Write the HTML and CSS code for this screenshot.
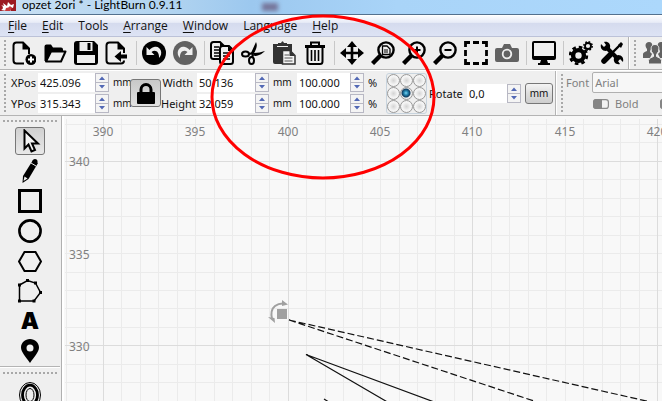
FILE: index.html
```html
<!DOCTYPE html>
<html lang="en">
<head>
<meta charset="utf-8">
<title>opzet 2ori * - LightBurn 0.9.11</title>
<link rel="stylesheet" href="styles.css">
</head>
<body>
<svg class="defs" aria-hidden="true">
  <symbol id="arrows" viewBox="0 0 14 19"><rect x=".5" y=".5" width="13" height="9" fill="#f4f4f4" stroke="#b8b8c4"/><rect x=".5" y="9.5" width="13" height="9" fill="#f4f4f4" stroke="#b8b8c4"/><path d="M7 3.500 10 7H4zM4 12h6l-3 3.500z" fill="#5268b5"/></symbol>
  <symbol id="toggle" viewBox="0 0 16 10"><rect x=".6" y=".6" width="14.800" height="8.800" rx="2.500" fill="#f2f2f2" stroke="#8a8a8a" stroke-width="1.200"/><path d="M3 0h6v10H3Q0 10 0 7V3Q0 0 3 0z" fill="#858585"/></symbol>
  <symbol id="lens" viewBox="0 0 24 24"><circle cx="15" cy="9" r="7.600" fill="none" stroke="#000" stroke-width="2.400"/><path d="m9.500 14.500-8 8" stroke="#000" stroke-width="4.400"/></symbol>
</svg>

<header class="titlebar">
  <svg class="logo" viewBox="0 0 16 12"><path d="M0 0h16v11H0z" fill="#9c1a22"/><path d="M1 10c3-1 2-4 0-5l3 1-1-3 4 3 1-4 3 3 3-1-1 4-3-1 1 4-3-2-1 2z" fill="#fff"/><path d="M6 8c2 0 3-1 4-2l2 2-2 3H5z" fill="#c73a3e"/></svg>
  <h1>opzet 2ori * - LightBurn 0.9.11</h1>
  <span class="ghost"></span>
</header>

<nav class="menubar">
  <button><u>F</u>ile</button><button><u>E</u>dit</button><button>Tools</button><button><u>A</u>rrange</button><button><u>W</u>indow</button><button>Language</button><button><u>H</u>elp</button>
</nav>

<div class="toolbar">
  <span class="grip"></span>
  <div class="tools">
    <button aria-label="New"><svg viewBox="0 0 24 24"><path d="M12 22.500H4.500Q1.500 22.500 1.500 19.500V4.500Q1.500 1.500 4.500 1.500H11l6 6v5.500" fill="none" stroke="#000" stroke-width="2"/><path d="M10.500 1v7.500H18z"/><circle cx="19" cy="18.500" r="5.500"/><path d="M19 15.500v6M16 18.500h6" stroke="#fff" stroke-width="2"/></svg></button>
    <button aria-label="Open"><svg viewBox="0 0 24 24"><path d="M1.500 20V5.500Q1.500 3.500 3.500 3.500H8l2 3h8q2 0 2 2V11H8L3 20z"/><path d="M8 10.500h14.500L18 20.500H3z" fill="#efefef" stroke="#000" stroke-width="2" stroke-linejoin="round"/></svg></button>
    <button aria-label="Save"><svg viewBox="0 0 24 24"><path d="M3 0h17l4 4v17q0 3-3 3H3q-3 0-3-3V3q0-3 3-3z"/><path d="M5.500 1h13v9h-13zM3 14h18v8H3z" fill="#efefef"/><path d="M13.500 2h3v7h-3z"/></svg></button>
    <button aria-label="Import"><svg viewBox="0 0 24 24"><path d="M19 12V7.500l-6-6H4.500Q1.500 1.500 1.500 4.500v15q0 3 3 3H16q3 0 3-3" fill="none" stroke="#000" stroke-width="2"/><path d="M12.500 1v7.500H20zM9.500 15.500 16 10v3.500h6v4h-6V21z"/></svg></button>
    <i class="sep"></i>
    <button aria-label="Undo"><svg viewBox="0 0 24 24"><circle cx="12" cy="12" r="12"/><path d="M4.500 6v8h8l-3-3c4-3 8 0 7.500 6 5-5 1-13-5-11-2 .5-3.500 1.500-4.500 3z" fill="#efefef"/></svg></button>
    <button aria-label="Redo"><svg viewBox="0 0 24 24"><circle cx="12" cy="12" r="12" fill="#626262"/><path d="M19.500 6v8h-8l3-3c-4-3-8 0-7.500 6-5-5-1-13 5-11 2 .5 3.500 1.500 4.500 3z" fill="#efefef"/></svg></button>
    <i class="sep"></i>
    <button aria-label="Copy"><svg viewBox="0 0 24 24"><g fill="#efefef" stroke="#000" stroke-width="2"><path d="M10 18H3.500Q1 18 1 15.500V3.500Q1 1 3.500 1H10l4 4v3"/><path d="M12.500 5H19l4 4v11.500q0 2.500-2.500 2.500h-8q-2.500 0-2.500-2.500v-13Q10 5 12.500 5z"/></g><path d="M4 6h5M4 9h5M4 12h5M4 15h5M13 12h7M13 15h7M13 18h7" stroke="#000" stroke-width="1.500"/><path d="M18 5v5h5zM10 1v4h4z"/></svg></button>
    <button aria-label="Cut"><svg viewBox="0 0 24 24"><path d="M15 1c2 4 0 8-3 13l-2-2zM24 10c-4 4-7 5-12 5l1-3c4 0 7-1 11-2z"/><path d="m8 13 4-1M11.500 16V12" stroke="#000" stroke-width="2"/><ellipse cx="4.500" cy="13" rx="3.500" ry="2.500" fill="none" stroke="#000" stroke-width="2"/><ellipse cx="10.500" cy="19.500" rx="2.500" ry="3.500" fill="none" stroke="#000" stroke-width="2"/></svg></button>
    <button aria-label="Paste"><svg viewBox="0 0 24 24"><path d="M1 3h5V2h3q1.500-3.500 3 0h3v1h5v8h-8v12H3q-2 0-2-2z" fill="#333"/><path d="M5 5.500h11" stroke="#efefef"/><path d="M10.500 9.500H18l5 5v8.500H10.500z" fill="#f4f4f4" stroke="#333" stroke-width="1.500"/><path d="M12.500 14H17M12.500 17h8M12.500 20h8" stroke="#555"/><path d="M17.500 9v6H23z" fill="#333"/></svg></button>
    <button aria-label="Delete"><svg viewBox="0 0 24 24"><g fill="none" stroke="#000"><path d="M2 5.500h20" stroke-width="3"/><path d="M8 4V1.500h8V4M4.500 7v13.500Q4.500 23 7 23h10q2.500 0 2.500-2.500V7" stroke-width="2"/><path d="M8.500 9v11M12 9v11M15.500 9v11" stroke-width="1.600"/></g></svg></button>
    <i class="sep"></i>
    <button aria-label="Pan"><svg viewBox="0 0 24 24"><path d="M12 3v18M3 12h18" stroke="#000" stroke-width="2.600"/><path d="m12 0 5 6H7zM12 24l5-6H7zM0 12l6-5v10zM24 12l-6-5v10z"/></svg></button>
    <button aria-label="Zoom to page"><svg viewBox="0 0 24 24"><use href="#lens"/><path d="M11.500 5h4.500l3 3v5.500h-7.500z" fill="none" stroke="#000" stroke-width="1.300"/><path d="M13 9h4M13 11h4" stroke="#000"/></svg></button>
    <button aria-label="Zoom in"><svg viewBox="0 0 24 24"><use href="#lens"/><path d="M15 5.500v7M11.500 9h7" stroke="#000" stroke-width="2"/></svg></button>
    <button aria-label="Zoom out"><svg viewBox="0 0 24 24"><use href="#lens"/><path d="M11.500 9h7" stroke="#000" stroke-width="2"/></svg></button>
    <button aria-label="Frame selection"><svg viewBox="0 0 24 24"><path d="M1.500 6V1.500H6M9 1.500h6M18 1.500h4.500V6M22.500 9v6M22.500 18v4.500H18M15 22.500H9M6 22.500H1.500V18M1.500 15V9" fill="none" stroke="#000" stroke-width="2.800"/></svg></button>
    <button aria-label="Camera"><svg viewBox="0 0 24 24"><path d="M2 7h5l2-4h6l2 4h5q2 0 2 2v10q0 2-2 2H2q-2 0-2-2V9q0-2 2-2z" fill="#626262"/><circle cx="12" cy="13" r="4.300" fill="none" stroke="#efefef" stroke-width="1.800"/></svg></button>
    <i class="sep"></i>
    <button aria-label="Preview"><svg viewBox="0 0 24 24"><path d="M2 0h20q2 0 2 2v15q0 2-2 2h-7l1 3h2v2H6v-2h2l1-3H2q-2 0-2-2V2Q0 0 2 0z"/><path d="M2 2h20v13H2z" fill="#efefef"/></svg></button>
    <i class="sep"></i>
    <button aria-label="Settings"><svg viewBox="0 0 24 24"><circle cx="9.500" cy="14.500" r="5.400" fill="none" stroke="#000" stroke-width="4.400"/><circle cx="9.500" cy="14.500" r="8.400" fill="none" stroke="#000" stroke-width="2.600" stroke-dasharray="3.600 3"/><circle cx="19" cy="5" r="3" fill="none" stroke="#000" stroke-width="1.800"/><circle cx="19" cy="5" r="4.200" fill="none" stroke="#000" stroke-width="1.500" stroke-dasharray="1.700 1.600"/></svg></button>
    <button aria-label="Machine tools"><svg viewBox="0 0 24 24"><path d="m6 6 13 13" stroke="#000" stroke-width="4"/><path d="M1 3l3 3 2-2-2-3c4-1 7 2 6 6l-4 3C2 10 0 7 1 3zM23 21l-3-3-2 2 2 3c-4 1-7-2-6-6l4-3c4 0 6 3 5 7z"/><path d="M20 4 11 13" stroke="#000" stroke-width="2.400"/><path d="m21 1 2 2-2 4-3-3z"/><path d="m10 14-6 6" stroke="#000" stroke-width="5.500" stroke-linecap="round"/></svg></button>
  </div>
  <span class="divider"></span>
  <span class="grip"></span>
  <button class="people" aria-label="Group"><svg viewBox="0 0 24 24" fill="#626262"><path d="M6 1c3 0 4 3 3 6l-2 3c0 2 2 2 2 3l-2 4H0v-4q0-1.500 4-3V8C1 4 3 1 6 1zM18 1c-3 0-4 3-3 6l2 3c0 2-2 2-2 3l2 4h7v-4q0-1.500-4-3V8c3-4 1-7-2-7z"/><path d="M12 3.500c3.500 0 4.500 3 3.500 7l-2 3v2q5 1.500 5 4v3.500H5.500V19.500q0-2.500 5-4v-2l-2-3c-1-4 0-7 3.500-7z" stroke="#efefef"/></svg></button>
</div>

<div class="toolbar props">
  <span class="grip"></span>
  <div class="pair pos">
    <label for="xp">XPos</label><span class="spin"><input id="xp" value="425.096"><svg><use href="#arrows"/></svg></span><span class="mm">mm</span>
    <label for="yp">YPos</label><span class="spin"><input id="yp" value="315.343"><svg><use href="#arrows"/></svg></span><span class="mm">mm</span>
  </div>
  <button class="lock" aria-label="Lock aspect ratio"><svg viewBox="0 0 20 23"><path d="M5 11V7.500a5 5 0 0 1 10 0V11" fill="none" stroke="#000" stroke-width="3"/><rect x="1" y="10" width="18" height="12" rx="1"/></svg></button>
  <div class="pair size">
    <label for="w">Width</label><span class="spin"><input id="w" value="50.136"><svg><use href="#arrows"/></svg></span><span class="mm">mm</span>
    <label for="h">Height</label><span class="spin"><input id="h" value="32.059"><svg><use href="#arrows"/></svg></span><span class="mm">mm</span>
  </div>
  <div class="pair scale">
    <span class="spin"><input aria-label="Width percent" value="100.000"><svg><use href="#arrows"/></svg></span><span>%</span>
    <span class="spin"><input aria-label="Height percent" value="100.000"><svg><use href="#arrows"/></svg></span><span>%</span>
  </div>
  <div class="anchor" role="radiogroup" aria-label="Anchor">
    <input type="radio" name="a" aria-label="Top left"><input type="radio" name="a" aria-label="Top"><input type="radio" name="a" aria-label="Top right">
    <input type="radio" name="a" aria-label="Left"><input type="radio" name="a" aria-label="Center" checked><input type="radio" name="a" aria-label="Right">
    <input type="radio" name="a" aria-label="Bottom left"><input type="radio" name="a" aria-label="Bottom"><input type="radio" name="a" aria-label="Bottom right">
  </div>
  <label class="rotate" for="r">Rotate</label>
  <span class="spin angle"><input id="r" value="0,0"><svg><use href="#arrows"/></svg></span>
  <button class="unit mm">mm</button>
  <span class="divider"></span>
  <span class="grip"></span>
  <div class="font">
    <div class="line"><label for="f">Font</label><select id="f"><option>Arial</option></select></div>
    <div class="line toggles"><button><svg><use href="#toggle"/></svg>Bold</button><button aria-label="Italic"><svg><use href="#toggle"/></svg></button></div>
  </div>
</div>

<main class="work">
  <aside class="side">
    <span class="grip flat"></span>
    <button class="on" aria-label="Select"><svg viewBox="0 0 24 24"><path d="M6.500 1.500v18l4-4 3 7 3.500-1.500-3-6.500h6z" fill="#f4f4f4" stroke="#000" stroke-width="2"/></svg></button>
    <button aria-label="Draw lines"><svg viewBox="0 0 24 24"><path d="m15 1 5 3-9.500 16-6 4 .5-7z"/><path d="m6.500 17.500 3 2-4 2.500z" fill="#efefef"/><path d="m13 4 5 3" stroke="#efefef"/><circle cx="17" cy="2.500" r="2.500"/></svg></button>
    <button aria-label="Rectangle"><svg viewBox="0 0 24 24"><path d="M1.500 1.500h21v21h-21z" fill="none" stroke="#000" stroke-width="3"/></svg></button>
    <button aria-label="Ellipse"><svg viewBox="0 0 24 24"><circle cx="12" cy="12" r="10.600" fill="none" stroke="#000" stroke-width="2.600"/></svg></button>
    <button aria-label="Polygon"><svg viewBox="0 0 24 24"><path d="M6.500 3h11L23 12.500 17.500 22h-11L1 12.500z" fill="none" stroke="#000" stroke-width="2"/></svg></button>
    <button aria-label="Edit nodes"><svg viewBox="0 0 24 24"><path d="M1.500 22V6l8-4.500 8 2.500 5 9.500L16 22z" fill="none" stroke="#000" stroke-width="1.500"/><path d="M0 4.500h3v3H0zM8 0h3v3H8zM16 2.500h3v3h-3zM21 12h3v3h-3zM14.500 20.500h3v3h-3zM0 20.500h3v3H0z"/></svg></button>
    <button aria-label="Text"><b>A</b></button>
    <button aria-label="Position laser"><svg viewBox="0 0 24 24"><path d="M12 0c5 0 9 4 9 8.500C21 13 16 18 12 24 8 18 3 13 3 8.500 3 4 7 0 12 0zm0 5.500a3.500 3.500 0 1 0 0 7 3.500 3.500 0 0 0 0-7z"/></svg></button>
    <span class="rule"></span>
    <span class="grip flat"></span>
    <button class="offset" aria-label="Offset shapes"><svg viewBox="0 0 24 28"><g fill="none" stroke="#000"><ellipse cx="12" cy="14" rx="10.500" ry="12.500"/><ellipse cx="12" cy="14" rx="7.500" ry="9.800" stroke-width="2.800"/><ellipse cx="12" cy="14" rx="4" ry="6.500"/></g></svg></button>
  </aside>
  <svg class="canvas">
    <g transform="translate(-64 -116)">
      <path class="minor" d="M66 119V900M85 119V900M121 119V900M140 119V900M158 119V900M177 119V900M195 119V900M214 119V900M232 119V900M251 119V900M269 119V900M306 119V900M325 119V900M343 119V900M362 119V900M380 119V900M399 119V900M417 119V900M435 119V900M454 119V900M491 119V900M509 119V900M528 119V900M546 119V900M565 119V900M583 119V900M602 119V900M620 119V900M639 119V900M65 124H1600M65 142H1600M65 179H1600M65 198H1600M65 216H1600M65 235H1600M65 253H1600M65 272H1600M65 290H1600M65 308H1600M65 327H1600M65 364H1600M65 382H1600"/>
      <path class="major" d="M103 119V900M288 119V900M472 119V900M657 119V900M65 161H1600M65 345H1600"/>
      <g class="ticks">
        <g class="mid"><text x="103" y="136">390</text><text x="195" y="136">395</text><text x="288" y="136">400</text><text x="380" y="136">405</text><text x="472" y="136">410</text><text x="565" y="136">415</text><text x="657" y="136">420</text></g>
        <text x="69" y="166">340</text><text x="69" y="259">335</text><text x="69" y="351">330</text>
      </g>
      <g class="shape"><path stroke-dasharray="7 3" d="M289 320 655 403M289 320 540 403"/><path d="M306 354.500 445 406M306 354.500 396 407M324 399l8 5"/></g>
      <path d="M277 309h10v10h-10z" fill="#a0a0a0"/>
      <path d="M272 319q-2-9 3-13 4-3 9-2.500" fill="none" stroke="#a0a0a0" stroke-width="2"/><path d="m282 300 6 4.500-6 1.500zM268 317l6.500 1 .5 5z" fill="#a0a0a0"/>
    </g>
  </svg>
</main>
<svg class="mark" aria-hidden="true"><ellipse cx="323" cy="97" rx="111" ry="81"/></svg>
</body>
</html>
```
FILE: styles.css
```css
* { box-sizing: border-box; }
body {
  margin: 0;
  height: 100vh;
  display: flex;
  flex-direction: column;
  overflow: hidden;
  position: relative;
  background: #efefef;
  color: #111;
  font: 11px/19px "Noto Sans", sans-serif;
}
button, input, select { font: inherit; color: inherit; margin: 0; padding: 0; }
button { border: 0; background: none; }
svg { display: block; }
.defs { position: absolute; width: 0; height: 0; }

.titlebar {
  flex: none;
  display: flex;
  height: 15px;
  overflow: hidden;
  border-bottom: 1px solid #54718e;
  background: linear-gradient(90deg, #c9e0f3, #b2d4f0 25%, #9cc8ef 38%, #a9d4f8 60%, #acd8fc);
}
.logo { width: 16px; height: 12px; }
.titlebar h1 { margin: 0 0 0 6px; font: 12px/9px Lato, sans-serif; color: #000; }
.ghost { width: 16px; height: 8px; margin: 3px 0 0 80px; background: #75759a; filter: blur(2px); }

.menubar {
  flex: none;
  display: flex;
  gap: 15px;
  height: 22px;
  padding: 0 8px;
  border-top: 1px solid #fff;
  border-bottom: 1px solid #bcc2d8;
  background: linear-gradient(#fbfcfe, #e8ecf7 32%, #d5dbee 36%, #dde3f4);
}
.menubar button { font: 12px/20px "Open Sans", sans-serif; }
.menubar u { text-underline-offset: 2px; }

.toolbar {
  flex: none;
  display: flex;
  align-items: center;
  height: 33px;
  border-bottom: 1px solid #b4b4b4;
  background: #efefef;
}
.grip {
  flex: none;
  width: 3px;
  height: 26px;
  margin-left: 4px;
  background: radial-gradient(circle at 1px 1px, #a8a8a8 1px, transparent 1px) 0 0 / 4px 4px;
}
.tools { display: flex; align-items: center; margin-left: 2px; }
.tools button { flex: none; width: 31px; padding: 0 4px 0 3px; }
.tools svg, .side svg, .people svg { width: 24px; height: 24px; }
.sep { width: 6px; height: 24px; background: linear-gradient(#c8c8c8, #c8c8c8) 3px 0 / 1px 24px no-repeat; }
.divider { flex: none; width: 2px; align-self: stretch; background: #b4b4b4; border-right: 1px solid #fff; }
.people { flex: none; margin-left: 6px; }

.props { height: 46px; border-top: 1px solid #fff; }
.props .grip { height: 38px; }
.pair { flex: none; display: grid; gap: 2px 4px; align-items: center; }
.pair label { text-align: right; }
.pos { grid-template-columns: 23px 71px 17px; margin-left: 4px; }
.size { grid-template-columns: 32px 72px 17px; }
.scale { grid-template-columns: 67px 12px; margin-left: 7px; }
.mm { font-size: 10px; }
.spin { display: flex; height: 19px; background: #fff; }
.spin input { flex: 1; min-width: 0; border: 0; padding-left: 2px; background: transparent; outline: 0; }
.spin svg { flex: none; width: 14px; height: 19px; }
.lock {
  flex: none;
  width: 31px;
  height: 28px;
  padding: 2px 5px;
  border: 1px solid #777;
  border-radius: 3px;
  background: linear-gradient(#c8c8c8, #e2e2e2);
}
.lock svg { width: 20px; height: 23px; }
.anchor {
  flex: none;
  display: grid;
  grid-template-columns: repeat(3, 13px);
  width: 41px;
  height: 41px;
  margin-left: 6px;
  border: 1px solid #c8d4de;
  border-radius: 3px;
}
.anchor input {
  appearance: none;
  width: 13px;
  height: 13px;
  border: 1px solid #999;
  border-radius: 50%;
  background: radial-gradient(circle, #d4d4d4, #f4f4f4 4px);
}
.anchor input:checked { background: radial-gradient(circle at 5px 5px, #7fd4f4, #2386b0 2px, #123c60 4px, #eee 5px); }
.rotate { flex: none; width: 34px; margin-left: 2px; }
.angle { flex: none; width: 54px; margin-left: 4px; }
.unit {
  flex: none;
  width: 28px;
  height: 21px;
  margin: 0 2px 0 4px;
  border: 1px solid #777;
  border-radius: 3px;
  background: linear-gradient(#f4f4f4, #ddd 50%, #cecece);
  line-height: 18px;
}
.font { flex: 1; min-width: 100px; margin-left: 2px; color: #808080; }
.line { display: flex; align-items: center; height: 21px; gap: 3px; }
.line select { flex: 1; height: 21px; padding-left: 2px; border: 1px solid #b0b0b0; border-radius: 2px; background: #f7f7f7; appearance: none; }
.toggles { gap: 22px; padding-left: 27px; }
.toggles button { display: flex; align-items: center; gap: 6px; }
.toggles svg { width: 16px; height: 10px; }

.work { flex: 1; display: flex; min-height: 0; }
.side {
  flex: none;
  display: flex;
  flex-direction: column;
  align-items: center;
  width: 62px;
  padding-right: 1px;
  overflow: hidden;
  border-right: 1px solid #b0b0b0;
  background: #efefef;
}
.side .flat { width: 55px; height: 3px; margin: 4px 0 3px; }
.side button { flex: none; width: 30px; height: 28px; margin: 1px 0; padding: 1px 2px; border: 1px solid transparent; }
.side .on { border-color: #777; border-radius: 3px; background: linear-gradient(#d0d0d0, #e8e8e8); }
.side b { font: 900 23px/24px Inter, sans-serif; color: #000; }
.rule { flex: none; align-self: stretch; height: 2px; background: #b4b4b4; border-bottom: 1px solid #fff; }
.side .offset { height: 32px; }
.side .offset svg { height: 28px; }

.canvas { flex: 1; min-width: 0; height: 100%; background: #f8f8f8; border-left: 2px solid #fff; }
.minor, .major { fill: none; stroke: #ebebeb; shape-rendering: crispEdges; }
.major { stroke: #dcdcdc; }
.ticks { fill: #808080; font-size: 12px; }
.mid { text-anchor: middle; }
.shape { fill: none; stroke: #111; stroke-width: 1.2; }

.mark { position: absolute; inset: 0; width: 100%; height: 100%; pointer-events: none; }
.mark ellipse { fill: none; stroke: #f00; stroke-width: 3; }
```
